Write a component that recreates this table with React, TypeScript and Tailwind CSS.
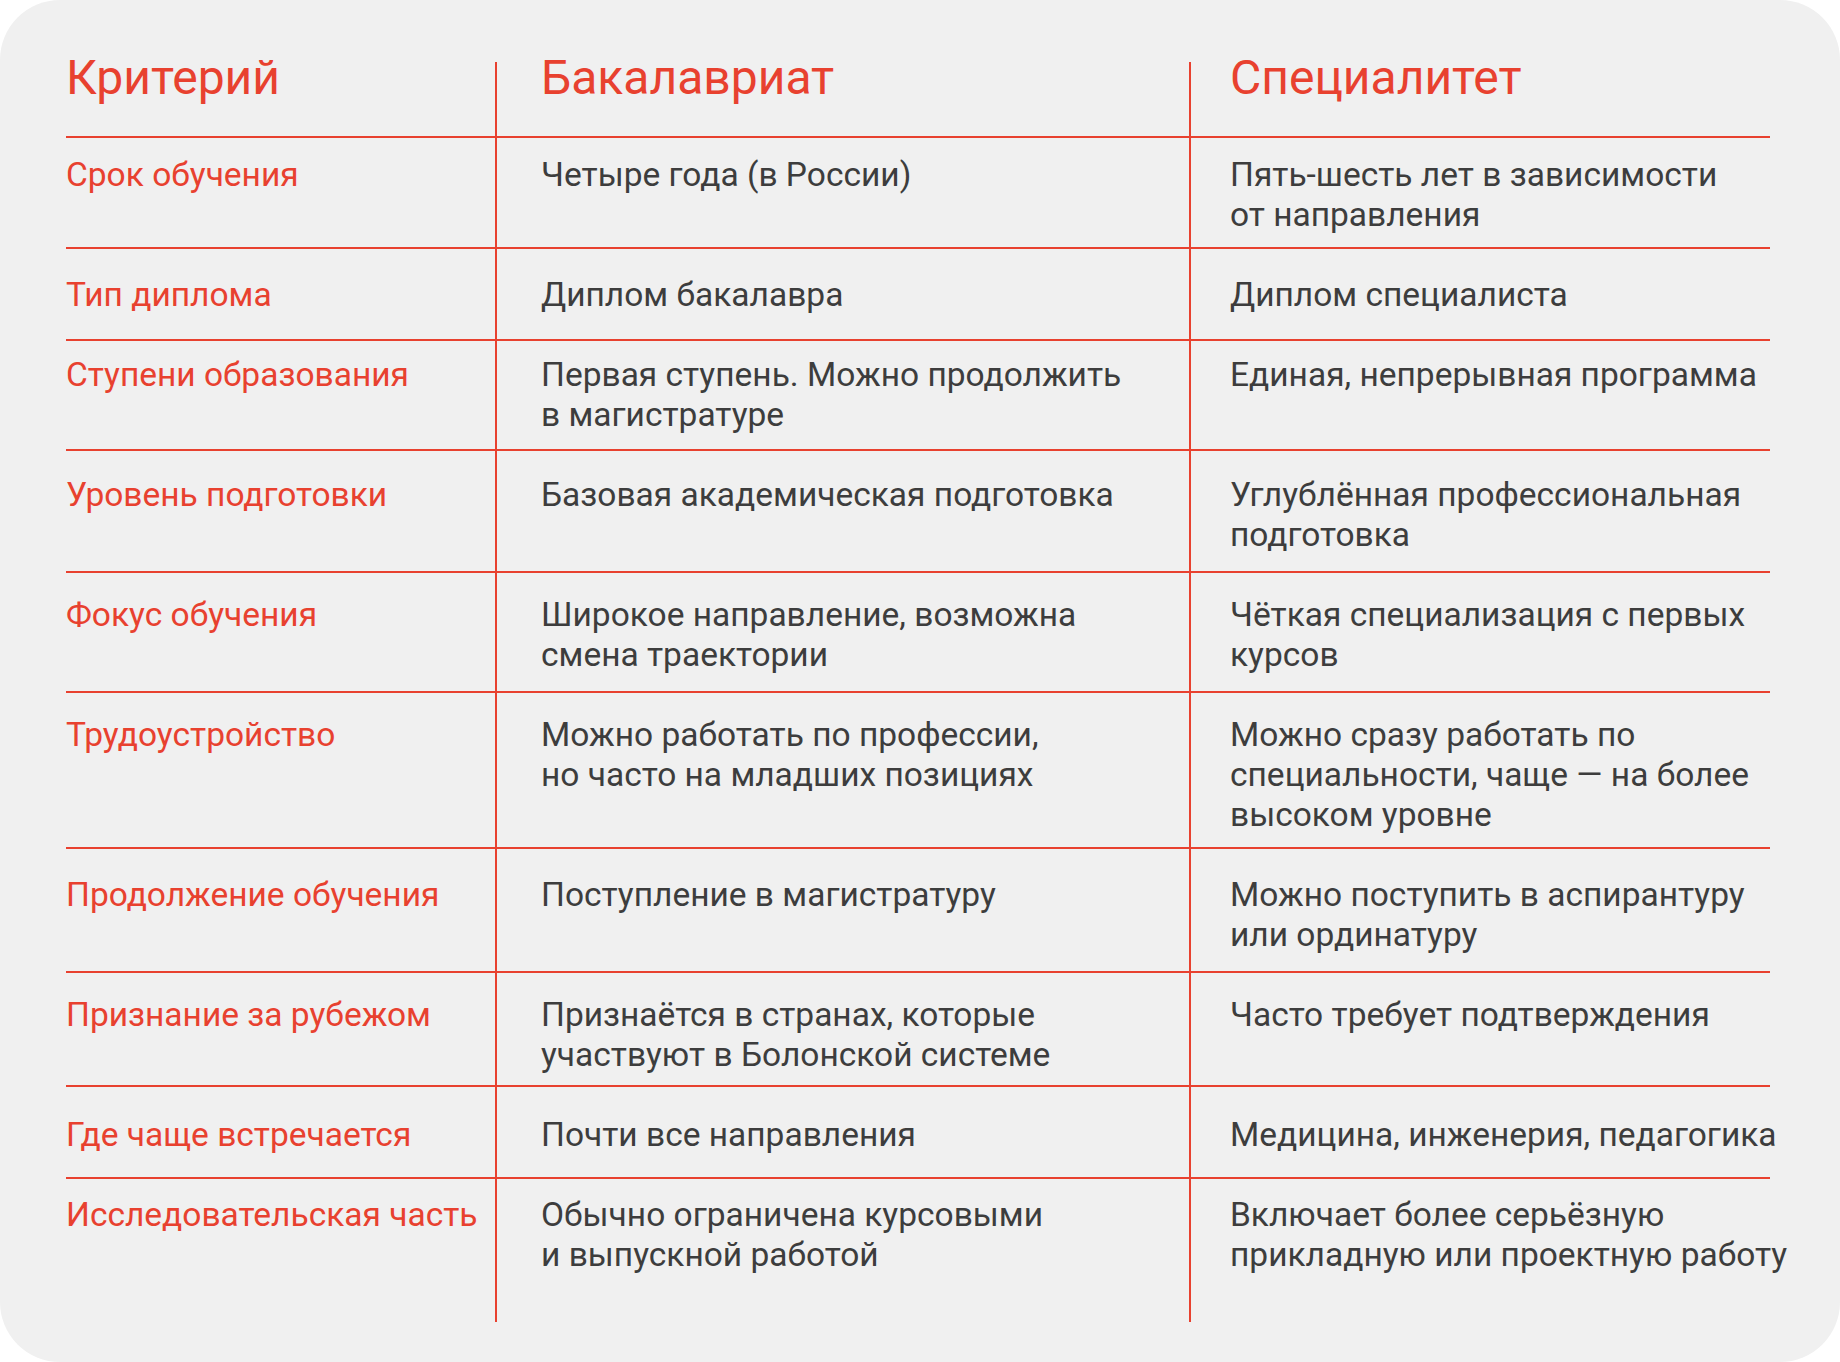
type Row = {
  label: string
  bachelor: string[]
  specialist: string[]
  height: string
  pad: string
}

// hand-tuned row heights and top paddings, the source table is not regular
const ROWS: Row[] = [
  {
    label: 'Срок обучения',
    bachelor: ['Четыре года (в России)'],
    specialist: ['Пять-шесть лет в зависимости', 'от направления'],
    height: 'h-[111px] border-b-2',
    pad: 'pt-[17px]',
  },
  {
    label: 'Тип диплома',
    bachelor: ['Диплом бакалавра'],
    specialist: ['Диплом специалиста'],
    height: 'h-[92px] border-b-2',
    pad: 'pt-[26px]',
  },
  {
    label: 'Ступени образования',
    bachelor: ['Первая ступень. Можно продолжить', 'в магистратуре'],
    specialist: ['Единая, непрерывная программа'],
    height: 'h-[110px] border-b-2',
    pad: 'pt-[14px]',
  },
  {
    label: 'Уровень подготовки',
    bachelor: ['Базовая академическая подготовка'],
    specialist: ['Углублённая профессиональная', 'подготовка'],
    height: 'h-[122px] border-b-2',
    pad: 'pt-[24px]',
  },
  {
    label: 'Фокус обучения',
    bachelor: ['Широкое направление, возможна', 'смена траектории'],
    specialist: ['Чёткая специализация с первых', 'курсов'],
    height: 'h-[120px] border-b-2',
    pad: 'pt-[22px]',
  },
  {
    label: 'Трудоустройство',
    bachelor: ['Можно работать по профессии,', 'но часто на младших позициях'],
    specialist: ['Можно сразу работать по', 'специальности, чаще — на более', 'высоком уровне'],
    height: 'h-[156px] border-b-2',
    pad: 'pt-[22px]',
  },
  {
    label: 'Продолжение обучения',
    bachelor: ['Поступление в магистратуру'],
    specialist: ['Можно поступить в аспирантуру', 'или ординатуру'],
    height: 'h-[124px] border-b-2',
    pad: 'pt-[26px]',
  },
  {
    label: 'Признание за рубежом',
    bachelor: ['Признаётся в странах, которые', 'участвуют в Болонской системе'],
    specialist: ['Часто требует подтверждения'],
    height: 'h-[114px] border-b-2',
    pad: 'pt-[22px]',
  },
  {
    label: 'Где чаще встречается',
    bachelor: ['Почти все направления'],
    specialist: ['Медицина, инженерия, педагогика'],
    height: 'h-[92px] border-b-2',
    pad: 'pt-[28px]',
  },
  {
    label: 'Исследовательская часть',
    bachelor: ['Обычно ограничена курсовыми', 'и выпускной работой'],
    specialist: ['Включает более серьёзную', 'прикладную или проектную работу'],
    height: 'h-[143px]',
    pad: 'pt-[16px]',
  },
]

function Lines({ lines }: { lines: string[] }) {
  return (
    <>
      {lines.map((line) => (
        <div key={line} className="whitespace-nowrap">
          {line}
        </div>
      ))}
    </>
  )
}

export default function App() {
  return (
    <div className="w-[1840px] h-[1362px] bg-white font-['Roboto','Liberation_Sans',sans-serif]">
      <div className="w-full h-full rounded-[60px] bg-[#f0f0f0] pl-[66px] pt-[62px]">
        <div className="w-[1704px]">
          <div className="grid grid-cols-[429px_694px_581px] h-[76px] border-b-2 border-[#e8412f] text-[#e8412f] text-[48px] leading-[32px]">
            <div className="whitespace-nowrap">Критерий</div>
            <div className="border-l-2 border-[#e8412f] pl-[44px] whitespace-nowrap">Бакалавриат</div>
            <div className="border-l-2 border-[#e8412f] pl-[39px] whitespace-nowrap">Специалитет</div>
          </div>

          {ROWS.map((row) => (
            <div
              key={row.label}
              className={`grid grid-cols-[429px_694px_581px] border-[#e8412f] text-[33.5px] leading-[40px] ${row.height}`}
            >
              <div className={`whitespace-nowrap text-[#e8412f] ${row.pad}`}>{row.label}</div>
              <div className={`border-l-2 border-[#e8412f] pl-[44px] text-[#3d3d3d] ${row.pad}`}>
                <Lines lines={row.bachelor} />
              </div>
              <div className={`border-l-2 border-[#e8412f] pl-[39px] text-[#3d3d3d] ${row.pad}`}>
                <Lines lines={row.specialist} />
              </div>
            </div>
          ))}
        </div>
      </div>
    </div>
  )
}
